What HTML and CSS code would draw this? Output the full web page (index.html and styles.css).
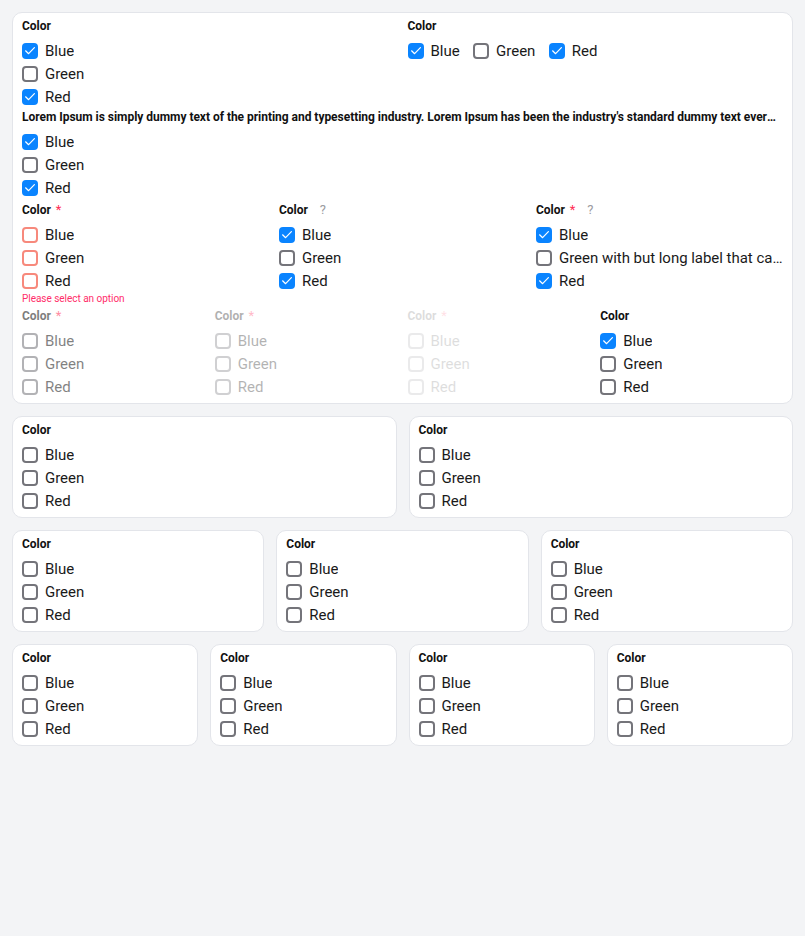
FILE: index.html
```html
<!DOCTYPE html>
<html lang="en">
<head>
<meta charset="utf-8">
<title>Checkbox groups</title>
<link rel="stylesheet" href="styles.css">
</head>
<body>
<main class="page">

  <section class="card">
    <div class="grid cols-2">
      <div class="field">
        <div class="field-label">Color</div>
        <div class="options">
          <label class="option"><span class="box checked"><svg viewBox="0 0 16 16"><path d="M3.6 7.8l3 2.9 5.8-6"/></svg></span><span class="text">Blue</span></label>
          <label class="option"><span class="box"></span><span class="text">Green</span></label>
          <label class="option"><span class="box checked"><svg viewBox="0 0 16 16"><path d="M3.6 7.8l3 2.9 5.8-6"/></svg></span><span class="text">Red</span></label>
        </div>
      </div>
      <div class="field">
        <div class="field-label">Color</div>
        <div class="options inline">
          <label class="option"><span class="box checked"><svg viewBox="0 0 16 16"><path d="M3.6 7.8l3 2.9 5.8-6"/></svg></span><span class="text">Blue</span></label>
          <label class="option"><span class="box"></span><span class="text">Green</span></label>
          <label class="option"><span class="box checked"><svg viewBox="0 0 16 16"><path d="M3.6 7.8l3 2.9 5.8-6"/></svg></span><span class="text">Red</span></label>
        </div>
      </div>
    </div>

    <div class="grid cols-1">
      <div class="field">
        <div class="field-label"><span class="label-text">Lorem Ipsum is simply dummy text of the printing and typesetting industry. Lorem Ipsum has been the industry's standard dummy text ever since the 1500s, when an unknown printer took a galley of type and scrambled it to make a type specimen book.</span></div>
        <div class="options">
          <label class="option"><span class="box checked"><svg viewBox="0 0 16 16"><path d="M3.6 7.8l3 2.9 5.8-6"/></svg></span><span class="text">Blue</span></label>
          <label class="option"><span class="box"></span><span class="text">Green</span></label>
          <label class="option"><span class="box checked"><svg viewBox="0 0 16 16"><path d="M3.6 7.8l3 2.9 5.8-6"/></svg></span><span class="text">Red</span></label>
        </div>
      </div>
    </div>

    <div class="grid cols-3">
      <div class="field invalid">
        <div class="field-label">Color<span class="req">*</span></div>
        <div class="options">
          <label class="option"><span class="box"></span><span class="text">Blue</span></label>
          <label class="option"><span class="box"></span><span class="text">Green</span></label>
          <label class="option"><span class="box"></span><span class="text">Red</span></label>
        </div>
        <div class="error">Please select an option</div>
      </div>
      <div class="field">
        <div class="field-label">Color<span class="help">?</span></div>
        <div class="options">
          <label class="option"><span class="box checked"><svg viewBox="0 0 16 16"><path d="M3.6 7.8l3 2.9 5.8-6"/></svg></span><span class="text">Blue</span></label>
          <label class="option"><span class="box"></span><span class="text">Green</span></label>
          <label class="option"><span class="box checked"><svg viewBox="0 0 16 16"><path d="M3.6 7.8l3 2.9 5.8-6"/></svg></span><span class="text">Red</span></label>
        </div>
      </div>
      <div class="field">
        <div class="field-label">Color<span class="req">*</span><span class="help">?</span></div>
        <div class="options">
          <label class="option"><span class="box checked"><svg viewBox="0 0 16 16"><path d="M3.6 7.8l3 2.9 5.8-6"/></svg></span><span class="text">Blue</span></label>
          <label class="option"><span class="box"></span><span class="text">Green with but long label that can be truncated when it does not fit</span></label>
          <label class="option"><span class="box checked"><svg viewBox="0 0 16 16"><path d="M3.6 7.8l3 2.9 5.8-6"/></svg></span><span class="text">Red</span></label>
        </div>
      </div>
    </div>

    <div class="grid cols-4">
      <div class="field disabled">
        <div class="field-label">Color<span class="req">*</span></div>
        <div class="options">
          <label class="option"><span class="box"></span><span class="text">Blue</span></label>
          <label class="option"><span class="box"></span><span class="text">Green</span></label>
          <label class="option"><span class="box"></span><span class="text">Red</span></label>
        </div>
      </div>
      <div class="field disabled faint">
        <div class="field-label">Color<span class="req">*</span></div>
        <div class="options">
          <label class="option"><span class="box"></span><span class="text">Blue</span></label>
          <label class="option"><span class="box"></span><span class="text">Green</span></label>
          <label class="option"><span class="box"></span><span class="text">Red</span></label>
        </div>
      </div>
      <div class="field disabled fainter">
        <div class="field-label">Color<span class="req">*</span></div>
        <div class="options">
          <label class="option"><span class="box"></span><span class="text">Blue</span></label>
          <label class="option"><span class="box"></span><span class="text">Green</span></label>
          <label class="option"><span class="box"></span><span class="text">Red</span></label>
        </div>
      </div>
      <div class="field">
        <div class="field-label">Color</div>
        <div class="options">
          <label class="option"><span class="box checked"><svg viewBox="0 0 16 16"><path d="M3.6 7.8l3 2.9 5.8-6"/></svg></span><span class="text">Blue</span></label>
          <label class="option"><span class="box"></span><span class="text">Green</span></label>
          <label class="option"><span class="box"></span><span class="text">Red</span></label>
        </div>
      </div>
    </div>
  </section>

  <div class="card-row cols-2">
    <section class="card">
      <div class="field">
        <div class="field-label">Color</div>
        <div class="options">
          <label class="option"><span class="box"></span><span class="text">Blue</span></label>
          <label class="option"><span class="box"></span><span class="text">Green</span></label>
          <label class="option"><span class="box"></span><span class="text">Red</span></label>
        </div>
      </div>
    </section>
    <section class="card">
      <div class="field">
        <div class="field-label">Color</div>
        <div class="options">
          <label class="option"><span class="box"></span><span class="text">Blue</span></label>
          <label class="option"><span class="box"></span><span class="text">Green</span></label>
          <label class="option"><span class="box"></span><span class="text">Red</span></label>
        </div>
      </div>
    </section>
  </div>

  <div class="card-row cols-3">
    <section class="card">
      <div class="field">
        <div class="field-label">Color</div>
        <div class="options">
          <label class="option"><span class="box"></span><span class="text">Blue</span></label>
          <label class="option"><span class="box"></span><span class="text">Green</span></label>
          <label class="option"><span class="box"></span><span class="text">Red</span></label>
        </div>
      </div>
    </section>
    <section class="card">
      <div class="field">
        <div class="field-label">Color</div>
        <div class="options">
          <label class="option"><span class="box"></span><span class="text">Blue</span></label>
          <label class="option"><span class="box"></span><span class="text">Green</span></label>
          <label class="option"><span class="box"></span><span class="text">Red</span></label>
        </div>
      </div>
    </section>
    <section class="card">
      <div class="field">
        <div class="field-label">Color</div>
        <div class="options">
          <label class="option"><span class="box"></span><span class="text">Blue</span></label>
          <label class="option"><span class="box"></span><span class="text">Green</span></label>
          <label class="option"><span class="box"></span><span class="text">Red</span></label>
        </div>
      </div>
    </section>
  </div>

  <div class="card-row cols-4">
    <section class="card">
      <div class="field">
        <div class="field-label">Color</div>
        <div class="options">
          <label class="option"><span class="box"></span><span class="text">Blue</span></label>
          <label class="option"><span class="box"></span><span class="text">Green</span></label>
          <label class="option"><span class="box"></span><span class="text">Red</span></label>
        </div>
      </div>
    </section>
    <section class="card">
      <div class="field">
        <div class="field-label">Color</div>
        <div class="options">
          <label class="option"><span class="box"></span><span class="text">Blue</span></label>
          <label class="option"><span class="box"></span><span class="text">Green</span></label>
          <label class="option"><span class="box"></span><span class="text">Red</span></label>
        </div>
      </div>
    </section>
    <section class="card">
      <div class="field">
        <div class="field-label">Color</div>
        <div class="options">
          <label class="option"><span class="box"></span><span class="text">Blue</span></label>
          <label class="option"><span class="box"></span><span class="text">Green</span></label>
          <label class="option"><span class="box"></span><span class="text">Red</span></label>
        </div>
      </div>
    </section>
    <section class="card">
      <div class="field">
        <div class="field-label">Color</div>
        <div class="options">
          <label class="option"><span class="box"></span><span class="text">Blue</span></label>
          <label class="option"><span class="box"></span><span class="text">Green</span></label>
          <label class="option"><span class="box"></span><span class="text">Red</span></label>
        </div>
      </div>
    </section>
  </div>

</main>
</body>
</html>
```

FILE: styles.css
```css
* {
  box-sizing: border-box;
}

html,
body {
  margin: 0;
  padding: 0;
  background: #f3f4f6;
}

body {
  font-family: Roboto, "Liberation Sans", Arial, sans-serif;
  color: #1a1a1a;
  letter-spacing: -0.03px;
}

.page {
  padding: 12px;
  display: flex;
  flex-direction: column;
  gap: 12px;
}

.card {
  background: #ffffff;
  border: 1px solid #e3e5ea;
  border-radius: 10px;
  padding: 5px 9px 4px;
  min-width: 0;
}

.card-row {
  display: grid;
  gap: 12px;
}

.card-row.cols-2 {
  grid-template-columns: repeat(2, minmax(0, 1fr));
}

.card-row.cols-3 {
  grid-template-columns: repeat(3, minmax(0, 1fr));
}

.card-row.cols-4 {
  grid-template-columns: repeat(4, minmax(0, 1fr));
}

/* field grids inside a card: labels / options / errors line up across columns */
.grid {
  display: grid;
  column-gap: 10px;
  row-gap: 0;
  grid-template-rows: auto auto auto;
}

.grid.cols-1 {
  grid-template-columns: minmax(0, 1fr);
}

.grid.cols-2 {
  grid-template-columns: repeat(2, minmax(0, 1fr));
}

.grid.cols-3 {
  grid-template-columns: repeat(3, minmax(0, 1fr));
}

.grid.cols-4 {
  grid-template-columns: repeat(4, minmax(0, 1fr));
}

.grid > .field {
  grid-row: span 3;
  display: grid;
  grid-template-rows: subgrid;
  row-gap: 0;
  min-width: 0;
}

.field-label {
  display: flex;
  align-items: flex-end;
  min-height: 16px;
  margin-bottom: 5px;
  font-size: 12px;
  line-height: 16px;
  font-weight: 700;
  color: #111111;
  white-space: nowrap;
  min-width: 0;
}

.label-text {
  overflow: hidden;
  text-overflow: ellipsis;
  white-space: nowrap;
  min-width: 0;
  margin-right: 6px;
}

.req {
  display: inline-block;
  color: #ff2d55;
  margin-left: 5px;
  font-size: 13px;
  line-height: 20px;
  height: 18px;
  font-weight: 400;
  align-self: stretch;
}

.help {
  display: inline-block;
  width: 18px;
  height: 18px;
  margin-left: 6px;
  text-align: center;
  color: #9b9b9f;
  font-size: 13px;
  line-height: 20px;
  font-weight: 400;
  align-self: stretch;
}

.options {
  display: flex;
  flex-direction: column;
  min-width: 0;
}

.options.inline {
  flex-direction: row;
  gap: 13.5px;
}

.option {
  display: flex;
  align-items: center;
  gap: 7px;
  height: 23.333px;
  font-size: 15px;
  color: #1a1a1a;
  min-width: 0;
}

.option .text {
  overflow: hidden;
  text-overflow: ellipsis;
  white-space: nowrap;
  min-width: 0;
}

.box {
  flex: none;
  width: 16px;
  height: 16px;
  border: 2px solid #74747a;
  border-radius: 4px;
  background: #ffffff;
  display: flex;
  align-items: center;
  justify-content: center;
}

.box.checked {
  border: none;
  background: #0a84ff;
}

.box svg {
  width: 16px;
  height: 16px;
  display: block;
}

.box svg path {
  fill: none;
  stroke: #ffffff;
  stroke-width: 1.2;
  stroke-linecap: round;
  stroke-linejoin: round;
}

.invalid .box {
  border-color: #f7897c;
}

.error {
  font-size: 10px;
  line-height: 12px;
  margin-bottom: 1px;
  color: #ff2d6a;
}

.disabled {
  opacity: 0.55;
}

.disabled.faint {
  opacity: 0.33;
}

.disabled.fainter {
  opacity: 0.14;
}
```
